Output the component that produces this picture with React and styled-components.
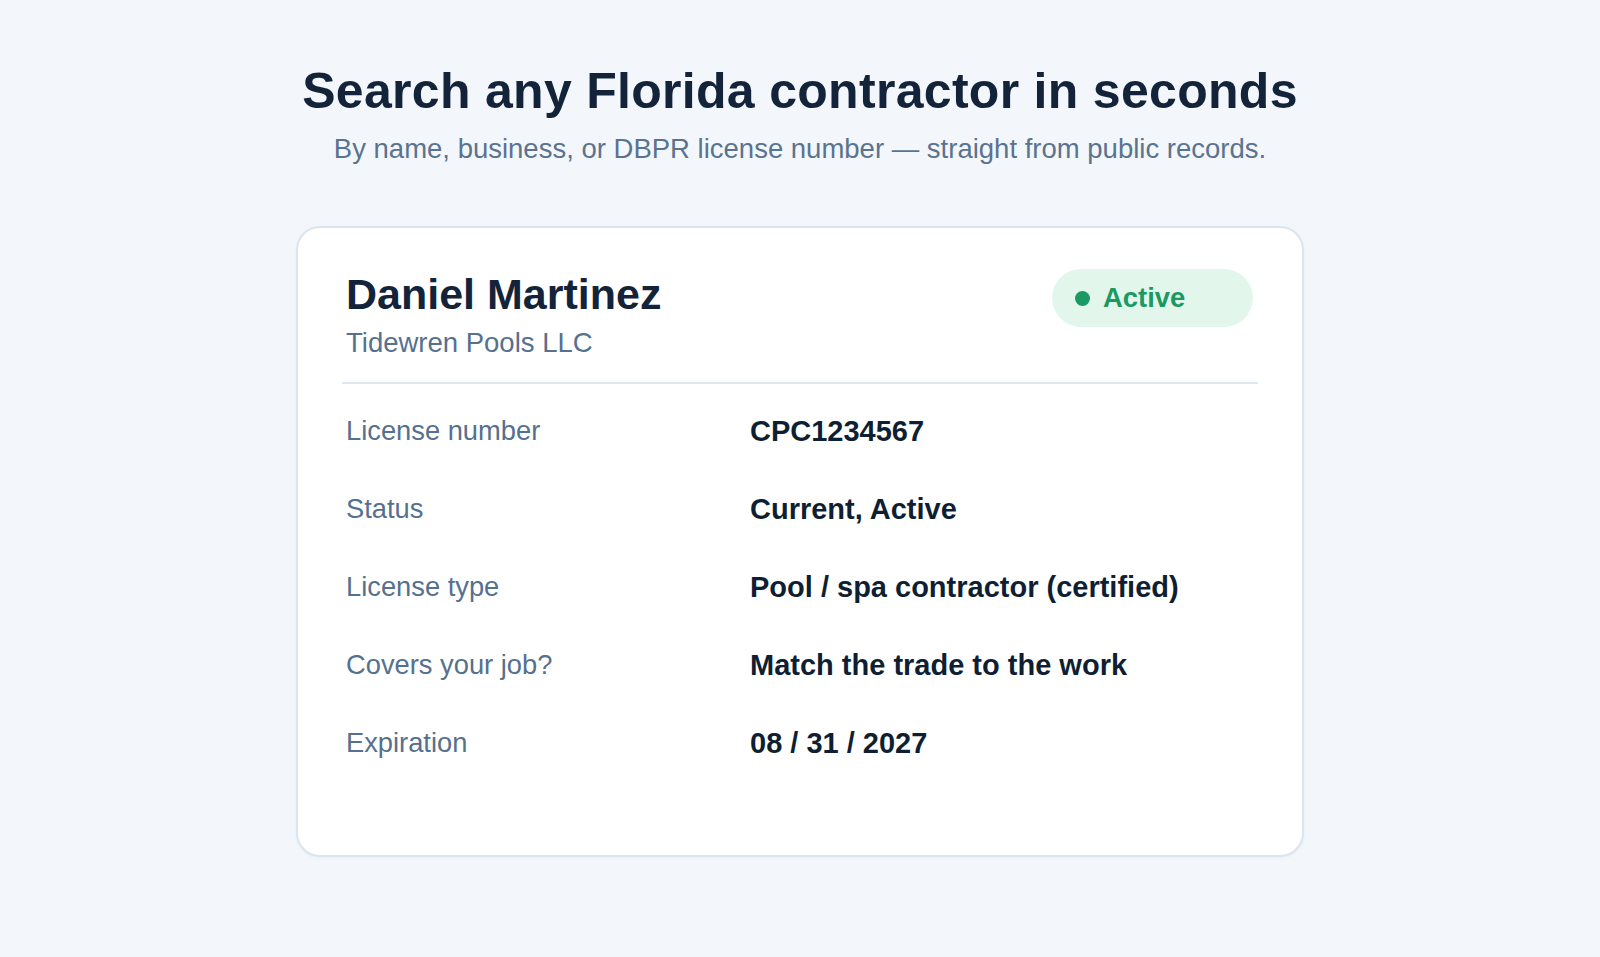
import styled, { createGlobalStyle } from 'styled-components';

const GlobalStyle = createGlobalStyle`
  * {
    box-sizing: border-box;
  }
  body {
    margin: 0;
    background: #f3f7fb;
    font-family: 'Liberation Sans', Arial, sans-serif;
  }
`;

const rows = [
  { label: 'License number', value: 'CPC1234567' },
  { label: 'Status', value: 'Current, Active' },
  { label: 'License type', value: 'Pool / spa contractor (certified)' },
  { label: 'Covers your job?', value: 'Match the trade to the work' },
  { label: 'Expiration', value: '08 / 31 / 2027' },
];

const App = () => {
  return (
    <>
      <GlobalStyle />
      <St.Page>
        <St.Hero>
          <St.Title>Search any Florida contractor in seconds</St.Title>
          <St.Subtitle>By name, business, or DBPR license number — straight from public records.</St.Subtitle>
        </St.Hero>

        <St.Card>
          <St.CardHeader>
            <St.Who>
              <St.Name>Daniel Martinez</St.Name>
              <St.Company>Tidewren Pools LLC</St.Company>
            </St.Who>
            <St.Badge>
              <St.Dot />
              Active
            </St.Badge>
          </St.CardHeader>

          <St.Details>
            {rows.map((row) => (
              <St.Row key={row.label}>
                <St.Label>{row.label}</St.Label>
                <St.Value>{row.value}</St.Value>
              </St.Row>
            ))}
          </St.Details>
        </St.Card>
      </St.Page>
    </>
  );
};

export default App;

const St = {
  Page: styled.main`
    display: flex;
    flex-direction: column;
    align-items: center;

    min-height: 100vh;
    padding: 61px 24px 40px;
  `,
  Hero: styled.header`
    display: flex;
    flex-direction: column;
    align-items: center;

    margin-bottom: 59px;
  `,
  Title: styled.h1`
    margin: 0;

    font-size: 50px;
    line-height: 1.2;
    font-weight: 700;
    letter-spacing: 0.3px;
    color: #13243a;
  `,
  Subtitle: styled.p`
    margin: 10px 0 0;

    font-size: 27.5px;
    line-height: 1.32;
    color: #5a7391;
  `,
  Card: styled.section`
    width: 1008px;
    padding: 41px 44px 73px;

    background: #ffffff;
    border: 2px solid #dbe5f0;
    border-radius: 24px;
    box-shadow: 0 1px 3px rgba(15, 31, 51, 0.04);
  `,
  CardHeader: styled.div`
    display: flex;
    justify-content: space-between;
    align-items: flex-start;

    padding: 0 5px 23px 4px;
    border-bottom: 2px solid #dfe7f1;
  `,
  Who: styled.div`
    display: flex;
    flex-direction: column;
    gap: 6px;
  `,
  Name: styled.h2`
    margin: 0;

    font-size: 43px;
    line-height: 1.18;
    font-weight: 700;
    color: #13243a;
  `,
  Company: styled.p`
    margin: 0;

    font-size: 27.5px;
    line-height: 1.2;
    color: #56708f;
  `,
  Badge: styled.span`
    display: flex;
    align-items: center;
    gap: 13px;

    width: 201px;
    height: 58px;
    padding: 0 22px 0 23px;

    border-radius: 29px;
    background: #e3f6ec;

    font-size: 27.4px;
    font-weight: 700;
    color: #1a9a62;
  `,
  Dot: styled.span`
    width: 15px;
    height: 15px;

    border-radius: 50%;
    background: #1a9a62;
  `,
  Details: styled.div`
    display: flex;
    flex-direction: column;

    padding-top: 8px;
  `,
  Row: styled.div`
    display: grid;
    grid-template-columns: 404px 1fr;
    align-items: center;

    height: 78px;
    padding: 0 4px;
  `,
  Label: styled.span`
    font-size: 27.3px;
    color: #56708f;
  `,
  Value: styled.span`
    font-size: 29px;
    font-weight: 700;
    color: #0f1f33;
  `,
};
